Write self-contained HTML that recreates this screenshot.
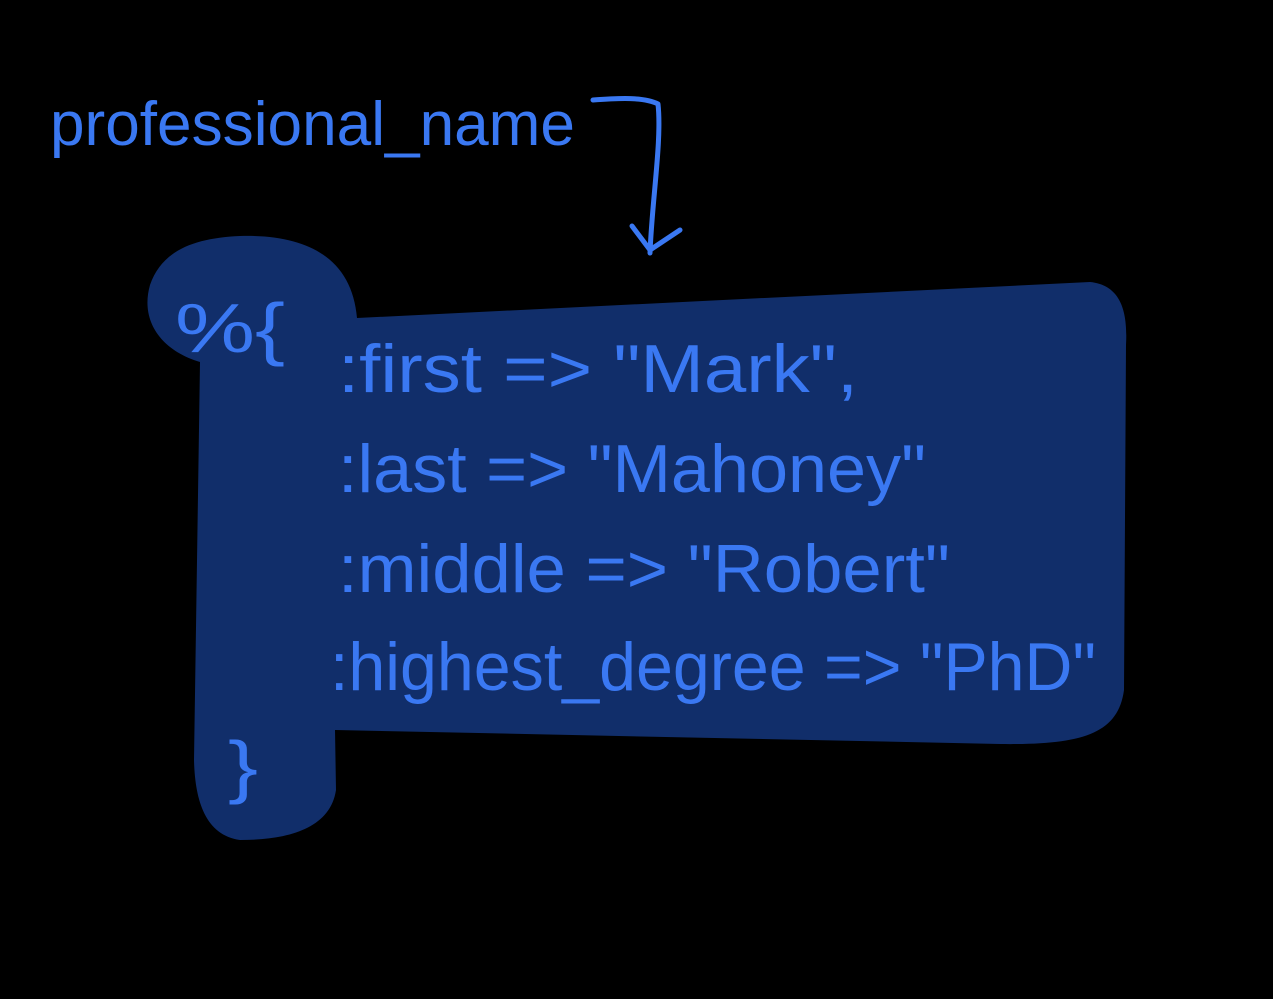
<!DOCTYPE html>
<html><head><meta charset="utf-8"><style>
html,body{margin:0;padding:0;background:#000;}
svg{display:block;}
text{font-family:"Liberation Sans",sans-serif;fill:#3a78f2;}
</style></head><body>
<svg width="1273" height="999" viewBox="0 0 1273 999" xmlns="http://www.w3.org/2000/svg">
<rect width="1273" height="999" fill="#000"/>
<path d="M200 362 C160 350,140 320,150 285 C162 250,195 238,240 236 C310 234,352 260,357 318 L1090 282 C1120 285,1128 310,1126 345 L1124 690 C1118 735,1080 745,1000 744 L335 730 L336 790 C330 830,285 840,240 840 C205 835,195 800,194 760 Z" fill="#112e6a"/>
<text x="50" y="145" font-size="62" textLength="525" lengthAdjust="spacingAndGlyphs">professional_name</text>
<path d="M593 100 C620 98,645 97,658 104 C662 140,652 200,650 253 M632 226 L650 250 L680 230" fill="none" stroke="#3a78f2" stroke-width="5" stroke-linecap="round" stroke-linejoin="round"/>
<text x="175" y="352" font-size="70" textLength="110" lengthAdjust="spacingAndGlyphs">%{</text>
<text x="338" y="392" font-size="68" textLength="520" lengthAdjust="spacingAndGlyphs">:first =&gt; "Mark",</text>
<text x="338" y="492" font-size="68" textLength="588" lengthAdjust="spacingAndGlyphs">:last =&gt; "Mahoney"</text>
<text x="338" y="592" font-size="68" textLength="612" lengthAdjust="spacingAndGlyphs">:middle =&gt; "Robert"</text>
<text x="330" y="690" font-size="68" textLength="766" lengthAdjust="spacingAndGlyphs">:highest_degree =&gt; "PhD"</text>
<text x="228" y="790" font-size="70" textLength="30" lengthAdjust="spacingAndGlyphs">}</text>
</svg>
</body></html>
